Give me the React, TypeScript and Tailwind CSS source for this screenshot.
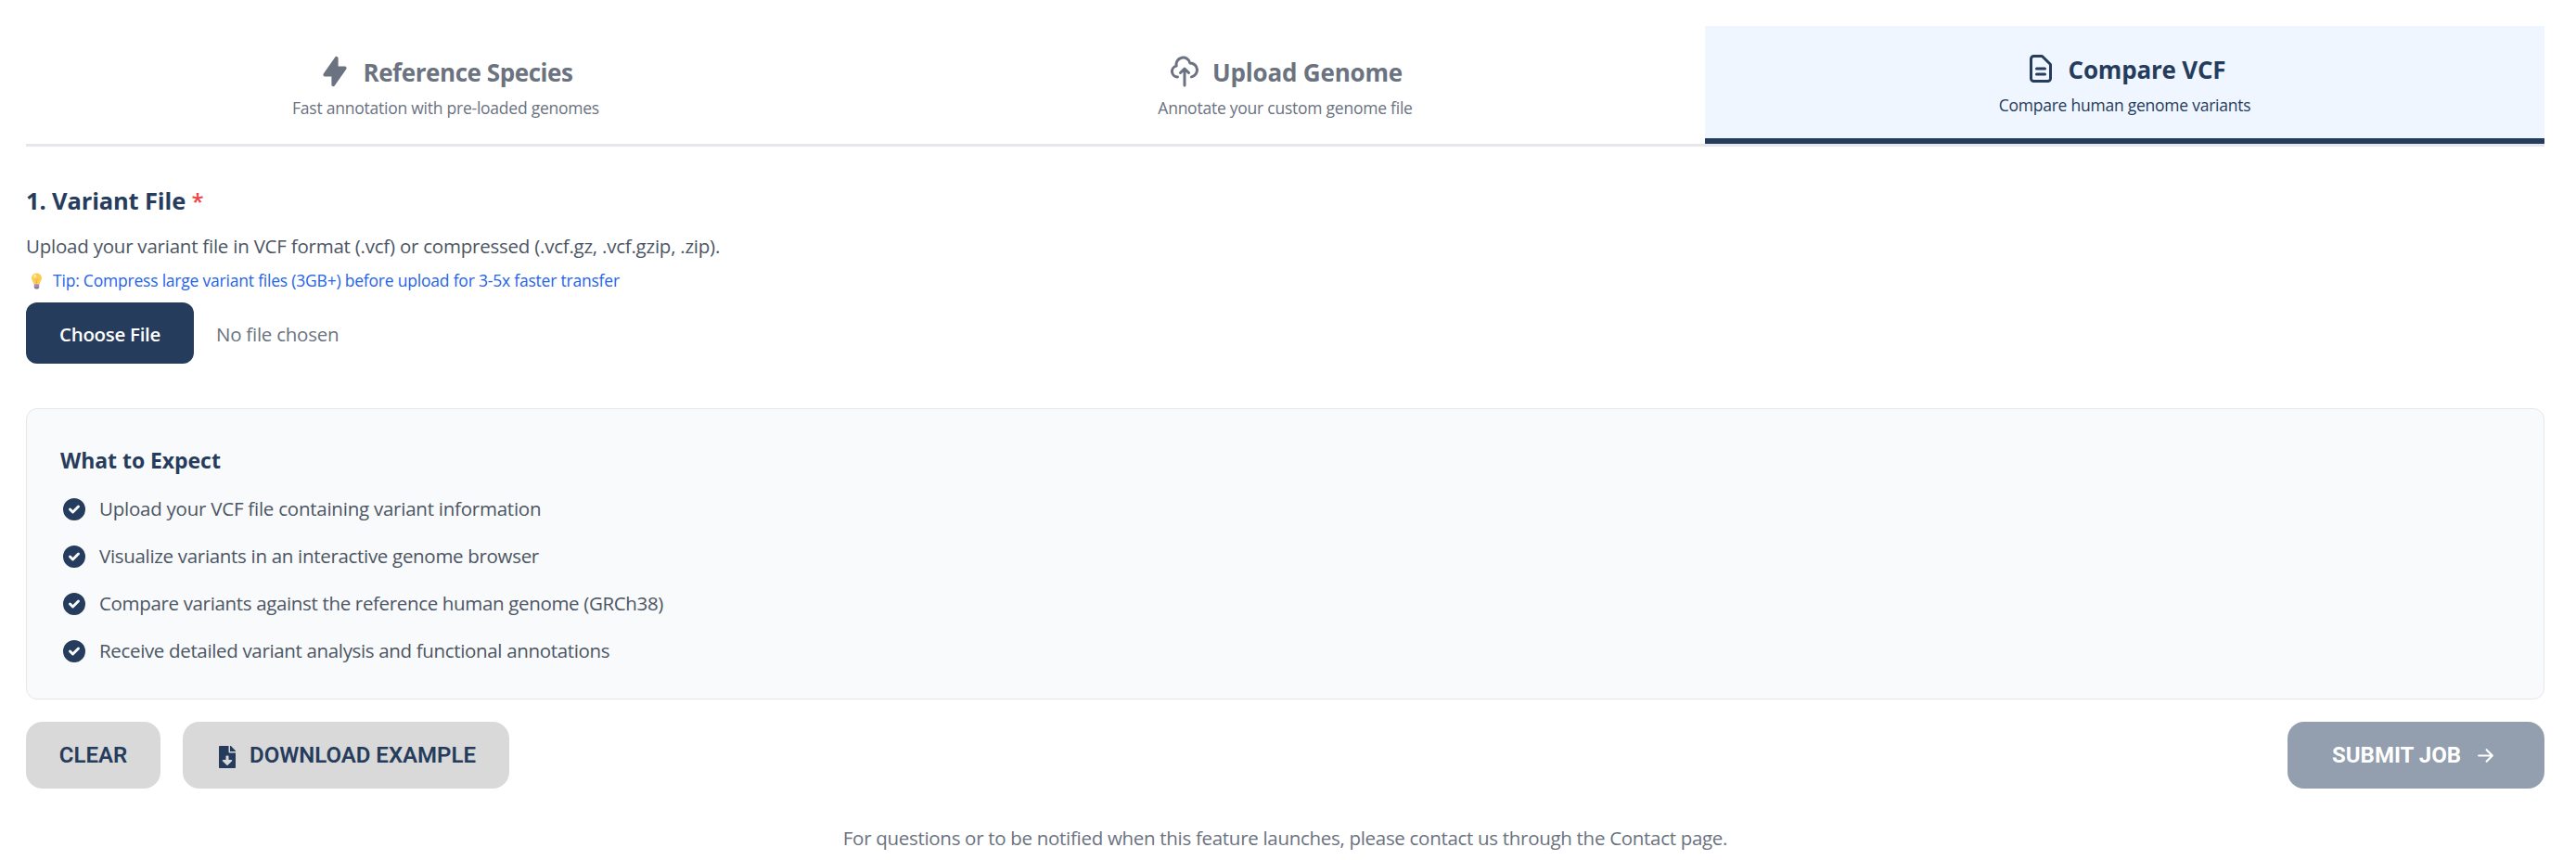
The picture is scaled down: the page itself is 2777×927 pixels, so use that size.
import type { ReactNode } from 'react';
import { HiLightningBolt, HiOutlineCloudUpload, HiOutlineDocumentText, HiCheckCircle, HiArrowRight } from 'react-icons/hi';
import { FaFileDownload } from 'react-icons/fa';

type TabProps = { icon: ReactNode; title: string; titleClass: string; subtitle: string; active?: boolean };

function Tab({ icon, title, titleClass, subtitle, active }: TabProps) {
  return (
    <button
      className={
        active
          ? 'flex flex-1 flex-col items-center border-b-[6px] border-[#263c5c] bg-[#eff6ff] pt-[28px] text-[#263c5c]'
          : 'flex flex-1 flex-col items-center pt-[31px] text-[#6b7280]'
      }
    >
      <span className="flex h-[36px] items-center gap-[12px]">
        {icon}
        <span className={titleClass}>{title}</span>
      </span>
      <span className="mt-[8px] text-[17.5px] leading-[27px] tracking-[-0.24px]">{subtitle}</span>
    </button>
  );
}

function Bulb() {
  return (
    <svg viewBox="0 0 14 20" className="ml-[5px] h-[18px] w-[13px]">
      <path d="M7 0.5C3.200 0.500 1 3.100 1 6.300c0 3 2.100 4.300 2.700 7.700h6.600C10.900 10.600 13 9.300 13 6.300 13 3.100 10.800 .5 7 .5z" fill="#fccb50" />
      <path d="M5.200 7.500l1.800 1.500 1.800-1.500M7 9v5" stroke="#f5a93c" strokeWidth="1" fill="none" />
      <ellipse cx="5" cy="4.200" rx="1.800" ry="2.200" fill="#ffe9a0" />
      <path d="M4 14h6v3.500c0 1-1 2-3 2s-3-1-3-2z" fill="#8a78a5" />
      <path d="M4 15.700h6" stroke="#c9bdd6" strokeWidth="0.8" />
    </svg>
  );
}

const expectations = [
  { text: 'Upload your VCF file containing variant information', cls: 'tracking-[-0.24px]' },
  { text: 'Visualize variants in an interactive genome browser', cls: 'tracking-[-0.31px]' },
  { text: 'Compare variants against the reference human genome (GRCh38)', cls: 'tracking-[-0.34px]' },
  { text: 'Receive detailed variant analysis and functional annotations', cls: 'tracking-[-0.34px]' },
];

export default function App() {
  return (
    <div className="h-[927px] bg-white px-[28px] pt-[28px] pr-[34px] font-['Open_Sans','Noto_Sans',sans-serif] text-[20.5px]">
      <div className="flex h-[130px] border-b-[3px] border-[#e5e7eb]">
        <Tab
          icon={<HiLightningBolt className="size-[36px]" />}
          title="Reference Species"
          titleClass="relative top-[1px] text-[26px] font-bold leading-[36px] tracking-[-0.43px]"
          subtitle="Fast annotation with pre-loaded genomes"
        />
        <Tab
          icon={<HiOutlineCloudUpload className="size-[36px]" />}
          title="Upload Genome"
          titleClass="relative top-[1px] text-[26px] font-bold leading-[36px] tracking-[-0.17px]"
          subtitle="Annotate your custom genome file"
        />
        <Tab
          active
          icon={<HiOutlineDocumentText className="size-[36px]" />}
          title="Compare VCF"
          titleClass="relative top-[1px] text-[26px] font-bold leading-[36px] tracking-[-0.2px]"
          subtitle="Compare human genome variants"
        />
      </div>

      <h2 className="mt-[39px] h-[38px] text-[25.5px] font-bold leading-[38px] tracking-[-0.15px] text-[#263c5c]">
        1. Variant File <span className="text-[24px] font-semibold text-[#ef4444]">*</span>
      </h2>
      <p className="mt-[14px] h-[32px] leading-[32px] tracking-[-0.23px] text-[#4b5563]">
        Upload your variant file in VCF format (.vcf) or compressed (.vcf.gz, .vcf.gzip, .zip).
      </p>
      <p className="mt-[8px] flex h-[27px] items-center text-[17.5px] leading-[27px] text-[#2563eb]">
        <Bulb />
        <span className="ml-[11px] tracking-[-0.21px]">
          Tip: Compress large variant files (3GB+) before upload for 3-5x faster transfer
        </span>
      </p>
      <div className="mt-[10px] flex h-[66px] items-center">
        <button className="h-[66px] w-[181px] rounded-[12px] bg-[#263c5c] pt-[2px] font-semibold tracking-[-0.3px] text-white">
          Choose File
        </button>
        <span className="ml-[24px] pt-[2px] tracking-[-0.25px] text-[#6b7280]">No file chosen</span>
      </div>

      <section className="mt-[48px] h-[314px] rounded-[12px] border border-[#e5e7eb] bg-[#f9fafb] pl-[36px] pt-[36px]">
        <h3 className="text-[23px] font-bold leading-[38px] tracking-[-0.05px] text-[#263c5c]">What to Expect</h3>
        <ul className="mt-[15px] flex flex-col gap-[15px] text-[#4b5563]">
          {expectations.map((item) => (
            <li key={item.text} className="flex h-[36px] items-center">
              <HiCheckCircle className="mt-[2px] size-[30px] text-[#263c5c]" />
              <span className={`ml-[12px] ${item.cls}`}>{item.text}</span>
            </li>
          ))}
        </ul>
      </section>

      <div className="mt-[24px] flex h-[72px] gap-[24px] font-[Roboto,sans-serif] text-[24px] font-semibold text-[#263c5c]">
        <button className="w-[145px] rounded-[18px] bg-[#d9d9d9]">CLEAR</button>
        <button className="flex w-[352px] items-center rounded-[18px] bg-[#d9d9d9] pl-[39px]">
          <FaFileDownload className="mt-[4px] h-[24px] w-[18px]" />
          <span className="ml-[15px]">DOWNLOAD EXAMPLE</span>
        </button>
        <button className="ml-auto flex w-[277px] items-center rounded-[18px] bg-[#939eae] pl-[48px] font-bold text-white">
          SUBMIT JOB
          <HiArrowRight className="ml-[16px] size-[21px]" />
        </button>
      </div>

      <p className="mt-[37px] text-center leading-[32px] tracking-[-0.3px] text-[#6b7280]">
        For questions or to be notified when this feature launches, please contact us through the Contact page.
      </p>
    </div>
  );
}
